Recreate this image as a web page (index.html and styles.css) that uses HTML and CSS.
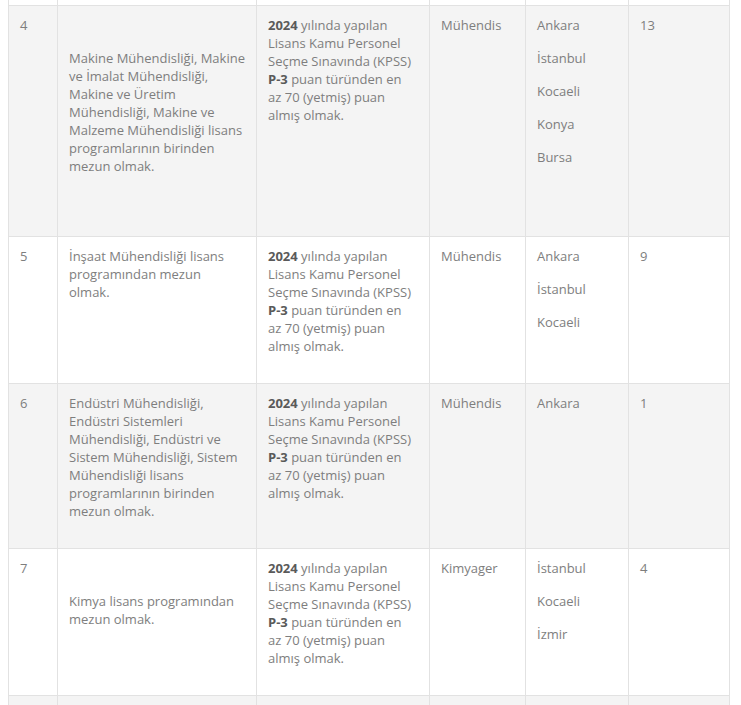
FILE: index.html
```html
<!DOCTYPE html>
<html lang="tr">
<head>
<meta charset="utf-8">
<title>Kadro Tablosu</title>
<link rel="stylesheet" href="styles.css">
</head>
<body>
<table class="jobs">
  <colgroup>
    <col class="c-no">
    <col class="c-req">
    <col class="c-exam">
    <col class="c-title">
    <col class="c-city">
    <col class="c-count">
  </colgroup>
  <tbody>
    <tr class="edge-top">
      <td></td><td></td><td></td><td></td><td></td><td></td>
    </tr>
    <tr>
      <td>4</td>
      <td><p>&nbsp;</p><p>Makine Mühendisliği, Makine<br>ve İmalat Mühendisliği,<br>Makine ve Üretim<br>Mühendisliği, Makine ve<br>Malzeme Mühendisliği lisans<br>programlarının birinden<br>mezun olmak.</p><p>&nbsp;</p></td>
      <td><p><strong>2024</strong> yılında yapılan<br>Lisans Kamu Personel<br>Seçme Sınavında (KPSS)<br><strong>P-3</strong> puan türünden en<br>az 70 (yetmiş) puan<br>almış olmak.</p></td>
      <td><p>Mühendis</p></td>
      <td><p>Ankara</p><p>İstanbul</p><p>Kocaeli</p><p>Konya</p><p>Bursa</p></td>
      <td>13</td>
    </tr>
    <tr>
      <td>5</td>
      <td><p>İnşaat Mühendisliği lisans<br>programından mezun<br>olmak.</p></td>
      <td><p><strong>2024</strong> yılında yapılan<br>Lisans Kamu Personel<br>Seçme Sınavında (KPSS)<br><strong>P-3</strong> puan türünden en<br>az 70 (yetmiş) puan<br>almış olmak.</p></td>
      <td><p>Mühendis</p></td>
      <td><p>Ankara</p><p>İstanbul</p><p>Kocaeli</p></td>
      <td>9</td>
    </tr>
    <tr>
      <td>6</td>
      <td><p>Endüstri Mühendisliği,<br>Endüstri Sistemleri<br>Mühendisliği, Endüstri ve<br>Sistem Mühendisliği, Sistem<br>Mühendisliği lisans<br>programlarının birinden<br>mezun olmak.</p></td>
      <td><p><strong>2024</strong> yılında yapılan<br>Lisans Kamu Personel<br>Seçme Sınavında (KPSS)<br><strong>P-3</strong> puan türünden en<br>az 70 (yetmiş) puan<br>almış olmak.</p></td>
      <td><p>Mühendis</p></td>
      <td><p>Ankara</p></td>
      <td>1</td>
    </tr>
    <tr>
      <td>7</td>
      <td><p>&nbsp;</p><p>Kimya lisans programından<br>mezun olmak.</p></td>
      <td><p><strong>2024</strong> yılında yapılan<br>Lisans Kamu Personel<br>Seçme Sınavında (KPSS)<br><strong>P-3</strong> puan türünden en<br>az 70 (yetmiş) puan<br>almış olmak.</p></td>
      <td><p>Kimyager</p></td>
      <td><p>İstanbul</p><p>Kocaeli</p><p>İzmir</p></td>
      <td>4</td>
    </tr>
    <tr class="edge-bottom">
      <td></td><td></td><td></td><td></td><td></td><td></td>
    </tr>
  </tbody>
</table>
</body>
</html>
```

FILE: styles.css
```css
html, body {
  background: #ffffff;
}

body {
  margin: 0;
  padding: 0 8px;
  height: 705px;
  overflow: hidden;
}

.jobs {
  width: 722px;
  table-layout: fixed;
  border-collapse: collapse;
  font-family: "Open Sans", "Liberation Sans", sans-serif;
  font-size: 13px;
  line-height: 18px;
  color: #7e7e7e;
}

.c-no { width: 49px; }
.c-req { width: 199px; }
.c-exam { width: 173px; }
.c-title { width: 96px; }
.c-city { width: 103px; }
.c-count { width: 101px; }

.jobs td {
  vertical-align: top;
  padding: 10px 11px 13px;
  border: 1px solid #e2e2e2;
  white-space: nowrap;
}

.jobs tr:nth-child(even) td {
  background: #f4f4f4;
}

.jobs .edge-top td {
  height: 5px;
  padding: 0;
  border-top: none;
}

.jobs .edge-bottom td {
  height: 30px;
  padding: 0;
}

.jobs p {
  margin: 0 0 15px;
}

.jobs strong {
  font-weight: 700;
  color: #5a5a5a;
}
```
